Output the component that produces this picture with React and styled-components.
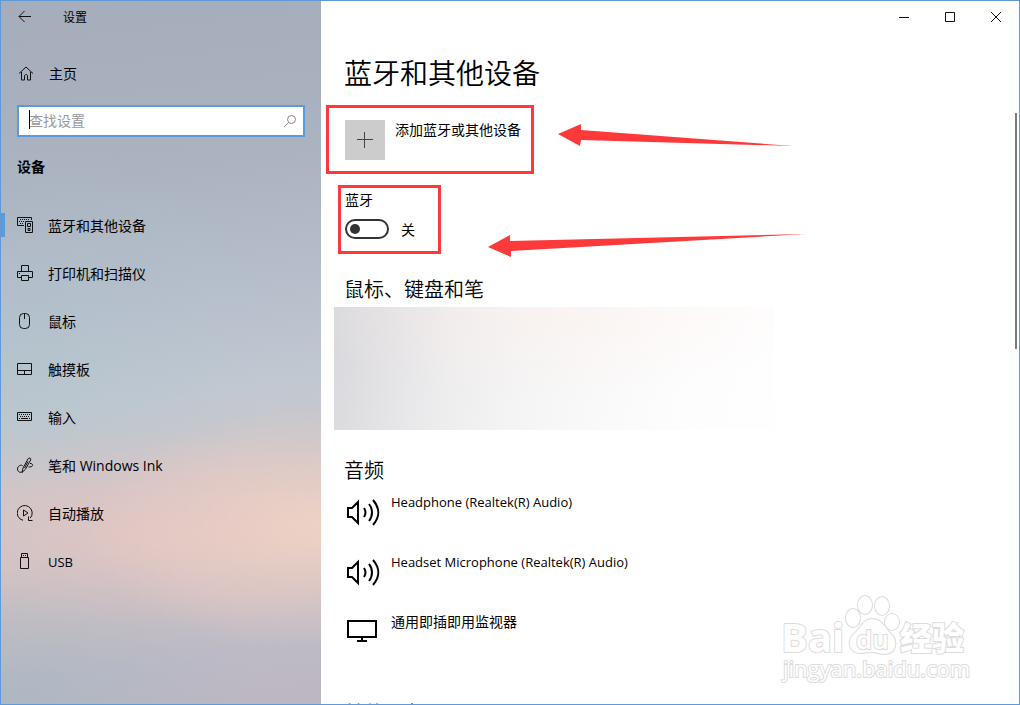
import styled, { createGlobalStyle } from "styled-components";

const GlobalStyle = createGlobalStyle`
  *, *::before, *::after {
    box-sizing: border-box;
  }
  body {
    margin: 0;
    background-color: #fff;
    color: #000;
    font-family: "Open Sans", "Noto Sans CJK SC", sans-serif;
    font-size: 14px;
    line-height: 20px;
  }
  h1, h2, p, ul {
    margin: 0;
    padding: 0;
  }
  button, input {
    font: inherit;
    color: inherit;
  }
`;

const Window = styled.div`
  position: relative;
  display: flex;
  height: 100vh;
  border: 1px solid #5f9ad6;
  overflow: hidden;
`;

/* ---------- Sidebar ---------- */

const Sidebar = styled.aside`
  flex: 0 0 320px;
  display: flex;
  flex-direction: column;
  background: radial-gradient(
      ellipse 240px 120px at 100% 75%,
      rgba(243, 212, 196, 0.8),
      rgba(243, 212, 196, 0.35) 50%,
      rgba(243, 212, 196, 0) 100%
    ),
    radial-gradient(
      ellipse 260px 100px at 45% 75%,
      rgba(234, 196, 192, 0.5),
      rgba(234, 196, 192, 0.25) 50%,
      rgba(234, 196, 192, 0) 100%
    ),
    radial-gradient(
      ellipse 260px 220px at 0% 50%,
      rgba(172, 196, 204, 0.45),
      rgba(172, 196, 204, 0.2) 50%,
      rgba(172, 196, 204, 0) 100%
    ),
    radial-gradient(
      ellipse 260px 200px at 0% 100%,
      rgba(164, 182, 192, 0.6),
      rgba(164, 182, 192, 0) 100%
    ),
    linear-gradient(
      173deg,
      #a6adba 0%,
      #abb3c0 25%,
      #b6becb 42%,
      #c1c8d1 56%,
      #c8c7cc 62%,
      #d1c5c8 67%,
      #d8c6c6 76%,
      #cdc0c4 84%,
      #bdbac6 92%,
      #beb6c1 100%
    );
`;

const SidebarTitle = styled.header`
  display: flex;
  align-items: center;
  height: 32px;
  font-size: 12px;
`;

const IconButton = styled.button`
  display: flex;
  align-items: center;
  justify-content: center;
  width: ${(props) => props.$width}px;
  height: 32px;
  padding: 0;
  border: 0;
  background: none;
`;

const TitleText = styled.span`
  padding: 2px 0 0 14px;
`;

const HomeLink = styled.a`
  display: flex;
  align-items: center;
  gap: 16px;
  height: 48px;
  margin-top: 17px;
  padding-left: 16px;
  color: inherit;
  text-decoration: none;
`;

const SearchBox = styled.label`
  position: relative;
  display: flex;
  align-items: center;
  height: 32px;
  margin: 7px 16px 0;
  padding: 0 5px 0 10px;
  border: 2px solid #5b9bd9;
  background-color: #fff;
`;

const SearchInput = styled.input`
  flex: 1;
  min-width: 0;
  padding: 0;
  border: 0;
  outline: 0;
  background: none;
  &::placeholder {
    color: #999;
    opacity: 1;
  }
`;

const Caret = styled.span`
  position: absolute;
  left: 10px;
  top: 3px;
  width: 1px;
  height: 19px;
  background-color: #000;
`;

const Category = styled.h2`
  margin: 20px 16px 24px;
  font-size: 14px;
  font-weight: 700;
  line-height: 20px;
`;

const NavList = styled.ul`
  list-style: none;
`;

const NavLink = styled.a`
  display: flex;
  align-items: center;
  gap: 12px;
  height: 48px;
  color: inherit;
  text-decoration: none;
  &::before {
    content: "";
    width: 4px;
    height: 24px;
    background-color: ${(props) => (props.$active ? "#5b9bd9" : "transparent")};
  }
`;

const NavLabel = styled.span`
  padding: 2px 0 0 3px;
`;

const Latin = styled.span`
  font-size: 13px;
`;

/* ---------- Main area ---------- */

const Main = styled.main`
  flex: 1;
  min-width: 0;
  display: flex;
  flex-direction: column;
`;

const WindowControls = styled.header`
  display: flex;
  justify-content: flex-end;
  height: 32px;
`;

const Content = styled.div`
  flex: 1;
  min-height: 0;
  display: flex;
  justify-content: space-between;
`;

const Page = styled.div`
  flex: 1;
  min-width: 0;
  padding: 20px 24px 0 23px;
  overflow: hidden;
`;

const ScrollThumb = styled.div`
  width: 2px;
  height: 236px;
  margin: 80px 2px 0 0;
  background-color: #7a7a7a;
`;

const PageTitle = styled.h1`
  font-size: 28px;
  font-weight: 350;
  line-height: 40px;
`;

const SectionTitle = styled.h2`
  margin-top: ${(props) => props.$space}px;
  font-size: 20px;
  font-weight: 350;
  line-height: 28px;
`;

const Marked = styled.div`
  position: relative;
  width: fit-content;
  margin: ${(props) => props.$space}px 0 0 1px;
`;

const Highlight = styled.span`
  position: absolute;
  top: ${(props) => props.$top}px;
  left: ${(props) => props.$left}px;
  width: ${(props) => props.$width}px;
  height: 69px;
  border: 3px solid #fd3939;
  pointer-events: none;
`;

const Arrow = styled.svg`
  position: absolute;
  top: ${(props) => props.$top}px;
  left: ${(props) => props.$left}px;
  fill: #fd3939;
  pointer-events: none;
`;

const AddButton = styled.button`
  display: flex;
  align-items: flex-start;
  gap: 10px;
  padding: 0;
  border: 0;
  background: none;
`;

const PlusTile = styled.span`
  display: flex;
  align-items: center;
  justify-content: center;
  width: 40px;
  height: 40px;
  background-color: #ccc;
`;

const ToggleRow = styled.label`
  display: flex;
  align-items: center;
  gap: 12px;
  height: 20px;
  margin-top: 9px;
`;

const ToggleState = styled.span`
  padding-top: 2px;
`;

const Toggle = styled.input`
  appearance: none;
  display: flex;
  align-items: center;
  width: 44px;
  height: 20px;
  margin: 0;
  padding: 0 3px;
  border: 2px solid #333;
  border-radius: 10px;
  &::before {
    content: "";
    width: 10px;
    height: 10px;
    border-radius: 5px;
    background-color: #333;
  }
`;

const HiddenDevices = styled.div`
  max-width: 440px;
  height: 123px;
  margin: 3px 0 0 -10px;
  background: radial-gradient(
      ellipse 260px 90px at 50% 0%,
      rgba(255, 238, 232, 0.4),
      rgba(255, 238, 232, 0) 100%
    ),
    linear-gradient(
      98deg,
      #d8d9dd 0%,
      #e2e1e4 12%,
      #eeedee 27%,
      #f4f4f4 42%,
      #f9f9f9 60%,
      #fdfdfd 80%,
      #fefefe 100%
    );
`;

const DeviceList = styled.ul`
  margin: 7px 0 0 1px;
  list-style: none;
`;

const Device = styled.li`
  display: flex;
  align-items: flex-start;
  gap: 10px;
  height: 60px;
`;

const DeviceIcon = styled.svg`
  flex: none;
  width: 36px;
  height: 40px;
  fill: none;
  stroke: #000;
  stroke-width: 2;
`;

const Watermark = styled.svg`
  position: absolute;
  right: 47px;
  bottom: 16px;
  overflow: visible;
  fill: #fff;
  stroke: #dcdcdc;
  stroke-width: 2;
  paint-order: stroke;
  pointer-events: none;
  font-family: "Open Sans", "Noto Sans CJK SC", sans-serif;
`;

const LineIcon = styled.svg`
  flex: none;
  width: 16px;
  height: 16px;
  fill: none;
  stroke: ${(props) => props.$color || "#111"};
  stroke-width: 1;
`;

function BluetoothIcon() {
  return (
    <LineIcon viewBox="0 0 16 16" aria-hidden="true">
      <path d="M7 8.5H.5V.5h14V3" />
      <path d="M3 2.5h10M2 4.5h5M3 6.5h4" strokeDasharray="1 1" />
      <path d="M8.5 4.5h7v11h-7z" />
      <path d="M10.5 6.5h3v3h-3zM11 11.5h2v2h-2z" />
    </LineIcon>
  );
}

function PrinterIcon() {
  return (
    <LineIcon viewBox="0 0 16 16" aria-hidden="true">
      <path d="M4.5 6V.5h7V6M4 12.5H.5v-6h15v6H12M4.5 10.5h7v5h-7z" />
      <path d="M2 8.5h1" />
    </LineIcon>
  );
}

function MouseIcon() {
  return (
    <LineIcon viewBox="0 0 16 16" aria-hidden="true">
      <rect x="2.5" y="0.5" width="10" height="15" rx="4" />
      <path d="M7.5 1v5" />
    </LineIcon>
  );
}

function TouchpadIcon() {
  return (
    <LineIcon viewBox="0 0 16 16" aria-hidden="true">
      <path d="M.5 2.5h14v11H.5zM.5 9.5h14M7.5 9.5v4" />
    </LineIcon>
  );
}

function KeyboardIcon() {
  return (
    <LineIcon viewBox="0 0 16 16" aria-hidden="true">
      <path d="M.5 3.5h14v8H.5z" />
      <path d="M2 5.5h12M3 7.5h10M2 9.5h1M12 9.5h1" strokeDasharray="1 1" />
      <path d="M4 9.5h7" />
    </LineIcon>
  );
}

function PenIcon() {
  return (
    <LineIcon viewBox="0 0 16 16" aria-hidden="true">
      <path d="M5 15.5 6 11 11.2 1.6c.8-1.4 3.3-.3 2.5 1.3L8.5 12.2z" />
      <path d="M11 4.5 7.5 11" />
      <path d="M5.5 8.5C3 7.5.5 9.5.5 12c0 2 1.5 3.5 3.3 3.3.7 0 1.200-.3 1.700-.8M13 6.500c1.500-.3 2.800.7 2.500 2-.3 1.200-1.700 1.500-4 1.500" />
    </LineIcon>
  );
}

function AutoplayIcon() {
  return (
    <LineIcon viewBox="0 0 16 16" aria-hidden="true">
      <path d="M6 15.3A7.5 7.5 0 1 1 13.3 13" />
      <path d="M6.5 5v6l4.5-3zM11.5 11.500v4h4" />
    </LineIcon>
  );
}

function UsbIcon() {
  return (
    <LineIcon viewBox="0 0 16 16" aria-hidden="true">
      <path d="M3.5 4.5h8v11h-8zM4.5 4V.5h6V4M6 2.5h1M8 2.5h1" />
    </LineIcon>
  );
}

function SpeakerIcon() {
  return (
    <DeviceIcon viewBox="0 0 36 40" aria-hidden="true">
      <path d="M4 16h3l6-6v21l-6-6H3v-9z" />
      <path d="M19 16c2 3 2 6 0 9M24 12c4 5 4 12 0 17M28 8c7 8 7 17 0 25" />
    </DeviceIcon>
  );
}

function MonitorIcon() {
  return (
    <DeviceIcon viewBox="0 0 36 40" aria-hidden="true">
      <path d="M3 9h28v16H3zM17 25v4M12 29h10" />
    </DeviceIcon>
  );
}

const navItems = [
  { label: "蓝牙和其他设备", Icon: BluetoothIcon, active: true },
  { label: "打印机和扫描仪", Icon: PrinterIcon },
  { label: "鼠标", Icon: MouseIcon },
  { label: "触摸板", Icon: TouchpadIcon },
  { label: "输入", Icon: KeyboardIcon },
  { label: "笔和 Windows Ink", Icon: PenIcon },
  { label: "自动播放", Icon: AutoplayIcon },
  { latin: "USB", Icon: UsbIcon },
];

const audioDevices = [
  { latin: "Headphone (Realtek(R) Audio)", Icon: SpeakerIcon },
  { latin: "Headset Microphone (Realtek(R) Audio)", Icon: SpeakerIcon },
  { label: "通用即插即用监视器", Icon: MonitorIcon },
];

function SettingsSidebar() {
  return (
    <Sidebar>
      <SidebarTitle>
        <IconButton $width={48} aria-label="返回">
          <LineIcon viewBox="0 0 16 16">
            <path d="M14 7.5H2M7.5 2 2 7.5 7.5 13" />
          </LineIcon>
        </IconButton>
        <TitleText>设置</TitleText>
      </SidebarTitle>

      <HomeLink href="#home">
        <LineIcon viewBox="0 0 16 16">
          <path d="M2 7.5 9 1l7 6.500M4.500 6v8h3v-4c0-2 3-2 3 0v4h3V6" />
        </LineIcon>
        主页
      </HomeLink>

      <SearchBox>
        <SearchInput type="text" placeholder="查找设置" aria-label="查找设置" />
        <Caret />
        <LineIcon viewBox="0 0 16 16" $color="#888">
          <circle cx="9.5" cy="6.5" r="4" />
          <path d="M6.5 9.5 2 14" />
        </LineIcon>
      </SearchBox>

      <Category>设备</Category>

      <nav>
        <NavList>
          {navItems.map(({ label, latin, Icon, active }) => (
            <li key={label || latin}>
              <NavLink href="#devices" $active={active}>
                <Icon />
                <NavLabel>{label || <Latin>{latin}</Latin>}</NavLabel>
              </NavLink>
            </li>
          ))}
        </NavList>
      </nav>
    </Sidebar>
  );
}

function BaiduWatermark() {
  return (
    <Watermark width="190" height="92" viewBox="0 0 190 92" aria-hidden="true">
      <text x="-1" y="56" fontSize="40" fontWeight="700">
        Bai
      </text>
      <ellipse cx="83" cy="9" rx="7" ry="9" />
      <ellipse cx="100" cy="10" rx="7" ry="9" />
      <ellipse cx="71" cy="22" rx="7" ry="9" />
      <ellipse cx="110" cy="26" rx="7" ry="8" />
      <path d="M90 23c-9 0-11 9-17 14-9 7-6 20 5 20 5 0 8-1 12-1s8 2 13 2c10 0 14-12 6-20-6-6-9-15-19-15z" />
      <text x="74" y="53" fontSize="26" fontWeight="600">
        du
      </text>
      <text x="118" y="54" fontSize="32" fontWeight="900">
        经验
      </text>
      <text x="1" y="81" fontSize="22">
        jingyan.baidu.com
      </text>
    </Watermark>
  );
}

function App() {
  return (
    <>
      <GlobalStyle />
      <Window>
        <SettingsSidebar />

        <Main>
          <WindowControls>
            <IconButton $width={46} aria-label="最小化">
              <LineIcon viewBox="0 0 16 16">
                <path d="M3 8.5h10" />
              </LineIcon>
            </IconButton>
            <IconButton $width={46} aria-label="最大化">
              <LineIcon viewBox="0 0 16 16">
                <path d="M3.5 3.5h9v9h-9z" />
              </LineIcon>
            </IconButton>
            <IconButton $width={46} aria-label="关闭">
              <LineIcon viewBox="0 0 16 16">
                <path d="m3 3 10 10M13 3 3 13" />
              </LineIcon>
            </IconButton>
          </WindowControls>

          <Content>
            <Page>
              <PageTitle>蓝牙和其他设备</PageTitle>

              <Marked $space={27}>
                <AddButton>
                  <PlusTile>
                    <LineIcon viewBox="0 0 16 16" $color="#444">
                      <path d="M0 7.5h16M7.5 0v16" />
                    </LineIcon>
                  </PlusTile>
                  添加蓝牙或其他设备
                </AddButton>
                <Highlight $top={-15} $left={-19} $width={208} />
                <Arrow $top={3} $left={212} width="240" height="26">
                  <path d="M1 11 24 1v6l212 16L24 17l-1 6z" />
                </Arrow>
              </Marked>

              <Marked $space={30}>
                <p id="bluetooth-label">蓝牙</p>
                <ToggleRow>
                  <Toggle
                    type="checkbox"
                    role="switch"
                    aria-labelledby="bluetooth-label"
                  />
                  <ToggleState>关</ToggleState>
                </ToggleRow>
                <Highlight $top={-5} $left={-7} $width={103} />
                <Arrow $top={42} $left={142} width="320" height="26">
                  <path d="M1 15 23 3v6l296-7L24 19v6z" />
                </Arrow>
              </Marked>

              <SectionTitle $space={37}>鼠标、键盘和笔</SectionTitle>
              <HiddenDevices />

              <SectionTitle $space={27}>音频</SectionTitle>
              <DeviceList>
                {audioDevices.map(({ label, latin, Icon }) => (
                  <Device key={label || latin}>
                    <Icon />
                    {label || <Latin>{latin}</Latin>}
                  </Device>
                ))}
              </DeviceList>

              <SectionTitle $space={28}>其他设备</SectionTitle>
            </Page>
            <ScrollThumb />
          </Content>
        </Main>

        <BaiduWatermark />
      </Window>
    </>
  );
}

export default App;
